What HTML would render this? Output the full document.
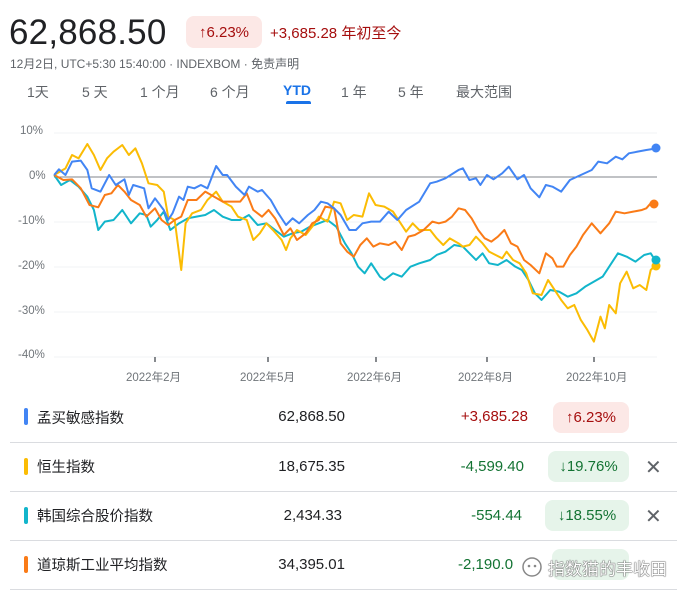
<!DOCTYPE html>
<html><head><meta charset="utf-8">
<style>
*{margin:0;padding:0;box-sizing:border-box}
body{width:687px;height:598px;background:#fff;font-family:"Liberation Sans","Noto Sans CJK SC",sans-serif;position:relative;overflow:hidden;color:#202124}
.abs{position:absolute;white-space:nowrap}
.big{left:9px;top:13px;font-size:35px;color:#202124;letter-spacing:0.2px}
.badge{position:absolute;border-radius:8px;font-size:15px;display:flex;align-items:center;justify-content:center}
.up{background:#fce8e6;color:#a50e0e}
.dn{background:#e6f4ea;color:#137333}
.tab{top:82px;font-size:14px;color:#5f6368}
.row-line{position:absolute;left:10px;width:667px;height:1px;background:#dadce0}
.bar{position:absolute;left:24px;width:4px;height:17px;border-radius:2px}
.name{left:37px;font-size:14.5px;color:#202124}
.val{font-size:15px;color:#202124;text-align:right}
.chg{font-size:15px;text-align:right}
.ax{font-size:11.5px;color:#70757a}
</style></head><body>
<div class="abs big">62,868.50</div>
<div class="badge up" style="left:186px;top:16px;width:76px;height:32px">↑6.23%</div>
<div class="abs" style="left:270px;top:22px;font-size:15px;color:#a50e0e">+3,685.28 年初至今</div>
<div class="abs" style="left:10px;top:55px;font-size:12px;color:#5f6368">12月2日, UTC+5:30 15:40:00 · INDEXBOM · 免责声明</div>
<div class="abs tab" style="left:27px">1天</div>
<div class="abs tab" style="left:82px">5 天</div>
<div class="abs tab" style="left:140px">1 个月</div>
<div class="abs tab" style="left:210px">6 个月</div>
<div class="abs tab" style="left:283px;color:#1a73e8;font-weight:bold">YTD</div>
<div class="abs" style="left:286px;top:101px;width:25px;height:3px;background:#1a73e8;border-radius:2px 2px 0 0"></div>
<div class="abs tab" style="left:341px">1 年</div>
<div class="abs tab" style="left:398px">5 年</div>
<div class="abs tab" style="left:456px">最大范围</div>

<div class="abs ax" style="left:20px;top:125px">10%</div>
<div class="abs ax" style="left:29px;top:170px">0%</div>
<div class="abs ax" style="left:18px;top:215px">-10%</div>
<div class="abs ax" style="left:18px;top:260px">-20%</div>
<div class="abs ax" style="left:18px;top:305px">-30%</div>
<div class="abs ax" style="left:18px;top:349px">-40%</div>
<div class="abs ax" style="left:126px;top:369px">2022年2月</div>
<div class="abs ax" style="left:240px;top:369px">2022年5月</div>
<div class="abs ax" style="left:347px;top:369px">2022年6月</div>
<div class="abs ax" style="left:458px;top:369px">2022年8月</div>
<div class="abs ax" style="left:566px;top:369px">2022年10月</div>

<svg class="abs" style="left:0;top:0" width="687" height="400">
<g stroke="#f1f3f4" stroke-width="1">
<line x1="54" y1="133" x2="657" y2="133"/><line x1="54" y1="222" x2="657" y2="222"/><line x1="54" y1="267" x2="657" y2="267"/><line x1="54" y1="312" x2="657" y2="312"/><line x1="54" y1="357" x2="657" y2="357"/>
</g>
<line x1="54" y1="177" x2="657" y2="177" stroke="#80868b" stroke-width="1"/>
<g stroke="#5f6368" stroke-width="1.5"><line x1="155" y1="357" x2="155" y2="362"/><line x1="268" y1="357" x2="268" y2="362"/><line x1="376" y1="357" x2="376" y2="362"/><line x1="487" y1="357" x2="487" y2="362"/><line x1="594" y1="357" x2="594" y2="362"/></g>
<g transform="translate(0,120) scale(0.4367,0.3333)" fill="none" stroke-width="2" stroke-linejoin="round">
<polyline vector-effect="non-scaling-stroke" stroke="#12b5cb" points="124,165 140,195 160,180 180,200 200,230 215,270 225,330 240,305 260,300 280,270 300,310 320,280 335,285 345,320 360,300 375,275 390,330 410,310 430,295 450,290 470,285 490,270 510,290 530,300 550,300 570,285 590,315 610,310 630,330 650,350 670,340 690,335 710,320 730,310 750,300 770,320 790,370 805,400 820,440 835,460 850,430 870,470 880,480 900,460 920,470 940,440 960,430 985,420 1000,405 1020,395 1040,375 1060,380 1075,400 1090,420 1105,400 1120,430 1140,435 1160,420 1180,440 1195,450 1210,480 1225,520 1240,540 1260,510 1280,515 1300,530 1320,520 1340,500 1360,485 1380,470 1400,430 1415,400 1435,410 1455,425 1475,405 1490,400 1500,420"/>
<polyline vector-effect="non-scaling-stroke" stroke="#fbbc04" points="124,165 150,145 165,105 180,115 200,72 215,105 230,150 245,115 260,95 280,75 295,105 310,85 325,130 340,190 360,195 375,215 385,290 400,300 415,450 425,310 440,280 460,270 475,240 495,215 510,245 530,260 545,290 565,300 580,360 595,340 610,310 625,330 645,360 655,390 665,355 680,330 700,345 715,320 730,290 750,305 765,245 780,250 795,300 810,285 830,290 845,220 860,255 880,260 900,275 915,305 930,335 945,310 960,330 985,330 1000,355 1015,375 1030,355 1050,370 1060,380 1075,375 1090,350 1105,370 1120,395 1135,405 1150,415 1160,395 1175,420 1190,430 1205,460 1220,520 1240,525 1255,480 1270,510 1285,540 1300,565 1315,555 1330,600 1345,630 1360,665 1375,590 1385,625 1395,555 1410,580 1420,490 1435,455 1450,505 1465,495 1480,510 1490,450 1500,437"/>
<polyline vector-effect="non-scaling-stroke" stroke="#fa7b17" points="124,165 145,180 165,178 185,205 205,255 225,262 240,225 255,220 270,195 285,215 300,240 320,255 335,290 355,265 370,300 385,315 400,300 415,290 430,240 450,240 470,215 490,230 510,245 530,245 550,245 565,220 580,270 600,290 615,270 630,295 650,345 665,325 680,360 700,340 715,310 730,300 745,260 765,265 780,370 795,395 810,410 825,375 840,355 855,380 870,370 890,375 905,365 920,390 935,350 950,345 970,330 990,305 1005,310 1020,305 1035,290 1050,265 1065,270 1080,295 1095,330 1110,355 1125,365 1140,350 1155,330 1170,370 1185,380 1200,420 1215,435 1235,460 1250,400 1265,415 1275,440 1290,440 1305,405 1320,380 1335,345 1355,310 1375,340 1395,310 1410,275 1430,280 1450,275 1470,270 1480,265 1490,250"/>
<polyline vector-effect="non-scaling-stroke" stroke="#4285f4" points="124,165 135,148 150,165 165,125 185,122 200,150 210,205 230,215 250,165 265,195 285,178 295,225 305,195 330,205 340,265 355,235 375,270 385,300 395,280 410,230 420,240 430,200 445,205 460,195 475,205 495,138 510,165 520,165 540,200 560,225 570,200 590,215 600,210 620,240 635,275 655,315 670,295 685,310 705,285 720,270 735,245 750,250 765,265 780,285 800,330 815,330 830,310 850,305 870,305 890,275 910,300 930,270 960,245 985,190 1000,185 1020,175 1050,150 1060,145 1075,180 1090,175 1100,195 1115,165 1130,178 1150,160 1165,140 1185,178 1200,165 1215,205 1235,232 1250,195 1265,200 1285,215 1305,180 1330,165 1355,150 1370,125 1390,130 1410,110 1425,118 1440,100 1460,95 1480,90 1500,86"/>
</g>
<circle cx="656" cy="148" r="4.5" fill="#4285f4"/>
<circle cx="654" cy="204" r="4.5" fill="#fa7b17"/>
<circle cx="656" cy="266" r="4.5" fill="#fbbc04"/>
<circle cx="656" cy="260" r="4.5" fill="#12b5cb"/>
</svg>

<!-- table -->
<div class="bar" style="top:408px;background:#4285f4"></div>
<div class="abs name" style="top:407px">孟买敏感指数</div>
<div class="abs val" style="right:342px;top:408px">62,868.50</div>
<div class="abs chg" style="right:159px;top:408px;color:#a50e0e">+3,685.28</div>
<div class="badge up" style="left:553px;top:402px;width:76px;height:31px">↑6.23%</div>
<div class="row-line" style="top:442px"></div>

<div class="bar" style="top:458px;background:#fbbc04"></div>
<div class="abs name" style="top:456px">恒生指数</div>
<div class="abs val" style="right:342px;top:458px">18,675.35</div>
<div class="abs chg" style="right:163px;top:458px;color:#137333">-4,599.40</div>
<div class="badge dn" style="left:548px;top:451px;width:81px;height:31px">↓19.76%</div>
<div class="abs" style="left:645px;top:455px;font-size:20px;color:#5f6368">✕</div>
<div class="row-line" style="top:491px"></div>

<div class="bar" style="top:507px;background:#12b5cb"></div>
<div class="abs name" style="top:505px">韩国综合股价指数</div>
<div class="abs val" style="right:345px;top:507px">2,434.33</div>
<div class="abs chg" style="right:165px;top:507px;color:#137333">-554.44</div>
<div class="badge dn" style="left:545px;top:500px;width:84px;height:31px">↓18.55%</div>
<div class="abs" style="left:645px;top:504px;font-size:20px;color:#5f6368">✕</div>
<div class="row-line" style="top:540px"></div>

<div class="bar" style="top:556px;background:#fa7b17"></div>
<div class="abs name" style="top:554px">道琼斯工业平均指数</div>
<div class="abs val" style="right:342px;top:556px">34,395.01</div>
<div class="abs chg" style="left:458px;top:556px;color:#137333">-2,190.0</div>
<div class="badge dn" style="left:552px;top:549px;width:77px;height:31px"></div>
<div class="row-line" style="top:589px"></div>
<svg class="abs" style="left:520px;top:555px" width="24" height="24"><circle cx="12" cy="12" r="9" fill="none" stroke="#888" stroke-width="1.5"/><circle cx="9" cy="11" r="1.3" fill="#888"/><circle cx="15" cy="11" r="1.3" fill="#888"/></svg>
<div class="abs" style="left:548px;top:555px;font-size:17px;color:#fff;text-shadow:0 0 1px #555,0 0 1px #555,0 0 1px #555">指数猫的丰收田</div>
</body></html>
